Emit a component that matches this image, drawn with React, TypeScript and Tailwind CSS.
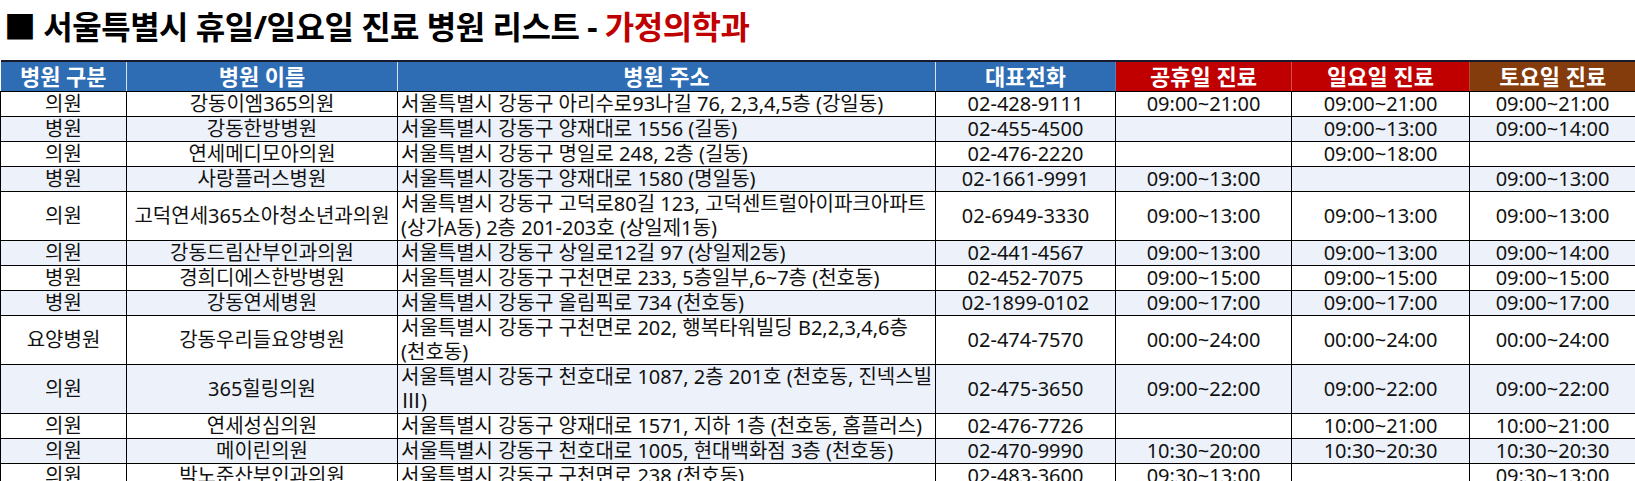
import React from "react";

type Row = {
  kind: string;
  name: string;
  addr: string[];
  tel: string;
  holiday: string;
  sunday: string;
  saturday: string;
};

const rows: Row[] = [
  { kind: "의원", name: "강동이엠365의원", addr: ["서울특별시 강동구 아리수로93나길 76, 2,3,4,5층 (강일동)"], tel: "02-428-9111", holiday: "09:00~21:00", sunday: "09:00~21:00", saturday: "09:00~21:00" },
  { kind: "병원", name: "강동한방병원", addr: ["서울특별시 강동구 양재대로 1556 (길동)"], tel: "02-455-4500", holiday: "", sunday: "09:00~13:00", saturday: "09:00~14:00" },
  { kind: "의원", name: "연세메디모아의원", addr: ["서울특별시 강동구 명일로 248, 2층 (길동)"], tel: "02-476-2220", holiday: "", sunday: "09:00~18:00", saturday: "" },
  { kind: "병원", name: "사랑플러스병원", addr: ["서울특별시 강동구 양재대로 1580 (명일동)"], tel: "02-1661-9991", holiday: "09:00~13:00", sunday: "", saturday: "09:00~13:00" },
  { kind: "의원", name: "고덕연세365소아청소년과의원", addr: ["서울특별시 강동구 고덕로80길 123, 고덕센트럴아이파크아파트", "(상가A동) 2층 201-203호 (상일제1동)"], tel: "02-6949-3330", holiday: "09:00~13:00", sunday: "09:00~13:00", saturday: "09:00~13:00" },
  { kind: "의원", name: "강동드림산부인과의원", addr: ["서울특별시 강동구 상일로12길 97 (상일제2동)"], tel: "02-441-4567", holiday: "09:00~13:00", sunday: "09:00~13:00", saturday: "09:00~14:00" },
  { kind: "병원", name: "경희디에스한방병원", addr: ["서울특별시 강동구 구천면로 233, 5층일부,6~7층 (천호동)"], tel: "02-452-7075", holiday: "09:00~15:00", sunday: "09:00~15:00", saturday: "09:00~15:00" },
  { kind: "병원", name: "강동연세병원", addr: ["서울특별시 강동구 올림픽로 734 (천호동)"], tel: "02-1899-0102", holiday: "09:00~17:00", sunday: "09:00~17:00", saturday: "09:00~17:00" },
  { kind: "요양병원", name: "강동우리들요양병원", addr: ["서울특별시 강동구 구천면로 202, 행복타워빌딩 B2,2,3,4,6층", "(천호동)"], tel: "02-474-7570", holiday: "00:00~24:00", sunday: "00:00~24:00", saturday: "00:00~24:00" },
  { kind: "의원", name: "365힐링의원", addr: ["서울특별시 강동구 천호대로 1087, 2층 201호 (천호동, 진넥스빌", "Ⅲ)"], tel: "02-475-3650", holiday: "09:00~22:00", sunday: "09:00~22:00", saturday: "09:00~22:00" },
  { kind: "의원", name: "연세성심의원", addr: ["서울특별시 강동구 양재대로 1571, 지하 1층 (천호동, 홈플러스)"], tel: "02-476-7726", holiday: "", sunday: "10:00~21:00", saturday: "10:00~21:00" },
  { kind: "의원", name: "메이린의원", addr: ["서울특별시 강동구 천호대로 1005, 현대백화점 3층 (천호동)"], tel: "02-470-9990", holiday: "10:30~20:00", sunday: "10:30~20:30", saturday: "10:30~20:30" },
  { kind: "의원", name: "박노준산부인과의원", addr: ["서울특별시 강동구 구천면로 238 (천호동)"], tel: "02-483-3600", holiday: "09:30~13:00", sunday: "", saturday: "09:30~13:00" },
];

const th = "border-t-2 border-t-[#1a1a2e] border-b border-b-black p-0";
const td = "border border-black text-center leading-[24px] p-0 whitespace-nowrap";

const App = () => {
  return (
    <div
      className="w-[1635px] h-[481px] overflow-hidden bg-white text-[#111]"
      style={{ fontFamily: '"Noto Sans", "Noto Sans CJK KR", sans-serif' }}
    >
      <div className="h-[60px] flex items-center pl-[4px] pb-[6px]">
        <h1 className="text-[32px] font-bold leading-none tracking-[-0.5px] text-black">
          ■ 서울특별시 휴일/일요일 진료 병원 리스트 - <span className="text-[#c00000]">가정의학과</span>
        </h1>
      </div>
      <table className="table-fixed border-collapse w-[1635px] text-[20px]">
        <colgroup>
          <col className="w-[126px]" />
          <col className="w-[271px]" />
          <col className="w-[538px]" />
          <col className="w-[180px]" />
          <col className="w-[176px]" />
          <col className="w-[178px]" />
          <col className="w-[166px]" />
        </colgroup>
        <thead>
          <tr className="h-[30px] text-white font-bold text-[22px] leading-none">
            <th className={th + " bg-[#2e6db4] border-r border-r-white/80"}>병원 구분</th>
            <th className={th + " bg-[#2e6db4] border-r border-r-white/80"}>병원 이름</th>
            <th className={th + " bg-[#2e6db4] border-r border-r-white/80"}>병원 주소</th>
            <th className={th + " bg-[#2e6db4] border-r border-r-[#5b7fb0]"}>대표전화</th>
            <th className={th + " bg-[#c00000] border-r border-r-[#d45050]"}>공휴일 진료</th>
            <th className={th + " bg-[#c00000] border-r border-r-[#b05030]"}>일요일 진료</th>
            <th className={th + " bg-[#843c0c]"}>토요일 진료</th>
          </tr>
        </thead>
        <tbody>
          {rows.map((r, i) => {
            const tall = r.addr.length > 1;
            return (
              <tr
                key={i}
                className={(tall ? "h-[49px] " : "h-[25px] ") + (i % 2 === 1 ? "bg-[#edf2fa]" : "bg-white")}
              >
                <td className={td}>{r.kind}</td>
                <td className={td}>{r.name}</td>
                <td className="border border-black text-left leading-[24px] py-0 pl-[3px] pr-0 whitespace-nowrap overflow-hidden">
                  {r.addr.map((line, j) => (
                    <div key={j}>{line}</div>
                  ))}
                </td>
                <td className={td}>{r.tel}</td>
                <td className={td}>{r.holiday}</td>
                <td className={td}>{r.sunday}</td>
                <td className={td}>{r.saturday}</td>
              </tr>
            );
          })}
        </tbody>
      </table>
    </div>
  );
};

export default App;
